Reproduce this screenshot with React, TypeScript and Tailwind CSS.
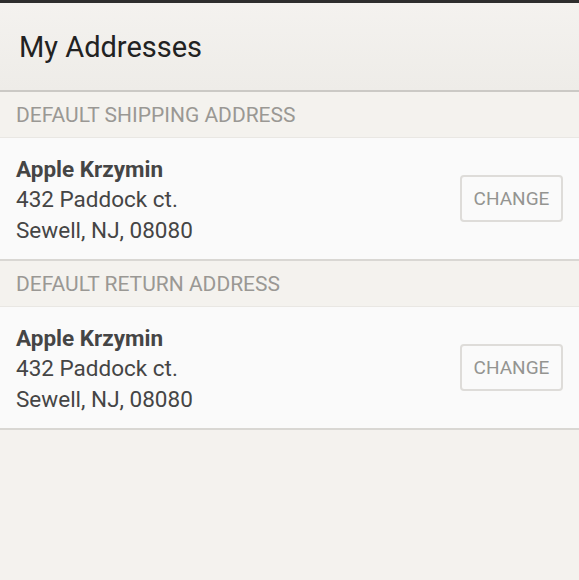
const addresses = [
  { label: "DEFAULT SHIPPING ADDRESS", name: "Apple Krzymin", line1: "432 Paddock ct.", line2: "Sewell, NJ, 08080" },
  { label: "DEFAULT RETURN ADDRESS", name: "Apple Krzymin", line1: "432 Paddock ct.", line2: "Sewell, NJ, 08080" },
]

function AddressSection({ label, name, line1, line2 }: (typeof addresses)[number]) {
  return (
    <section>
      <div className="h-[46px] flex items-center px-4 border-b border-[#e9e7e3]">
        <span className="text-[21px] text-[#9a9894] mt-[3px]">{label}</span>
      </div>
      <div className="h-[123px] bg-[#fafafa] border-b-2 border-[#d9d7d3] flex items-center justify-between pl-4 pr-4">
        <div className="text-[22.5px] leading-[30.5px] text-[#454545] mt-[2px]">
          <p className="font-bold">{name}</p>
          <p>{line1}</p>
          <p>{line2}</p>
        </div>
        <button className="w-[103px] h-[47px] border-2 border-[#dedcd9] rounded-[4px] text-[19px] text-[#949491] pt-[2px]">
          CHANGE
        </button>
      </div>
    </section>
  )
}

export default function App() {
  return (
    <div className="w-[579px] h-[580px] bg-[#f4f2ee] font-['Roboto',sans-serif] overflow-hidden">
      <div className="h-[3px] bg-[#2e2e2e]" />
      <header className="h-[89px] bg-gradient-to-b from-[#f4f2ef] to-[#eeece8] border-b-2 border-[#cbc9c5] flex items-center px-[19px]">
        <h1 className="text-[29px] text-[#222] mt-[3px]">My Addresses</h1>
      </header>
      {addresses.map((a) => (
        <AddressSection key={a.label} {...a} />
      ))}
    </div>
  )
}
